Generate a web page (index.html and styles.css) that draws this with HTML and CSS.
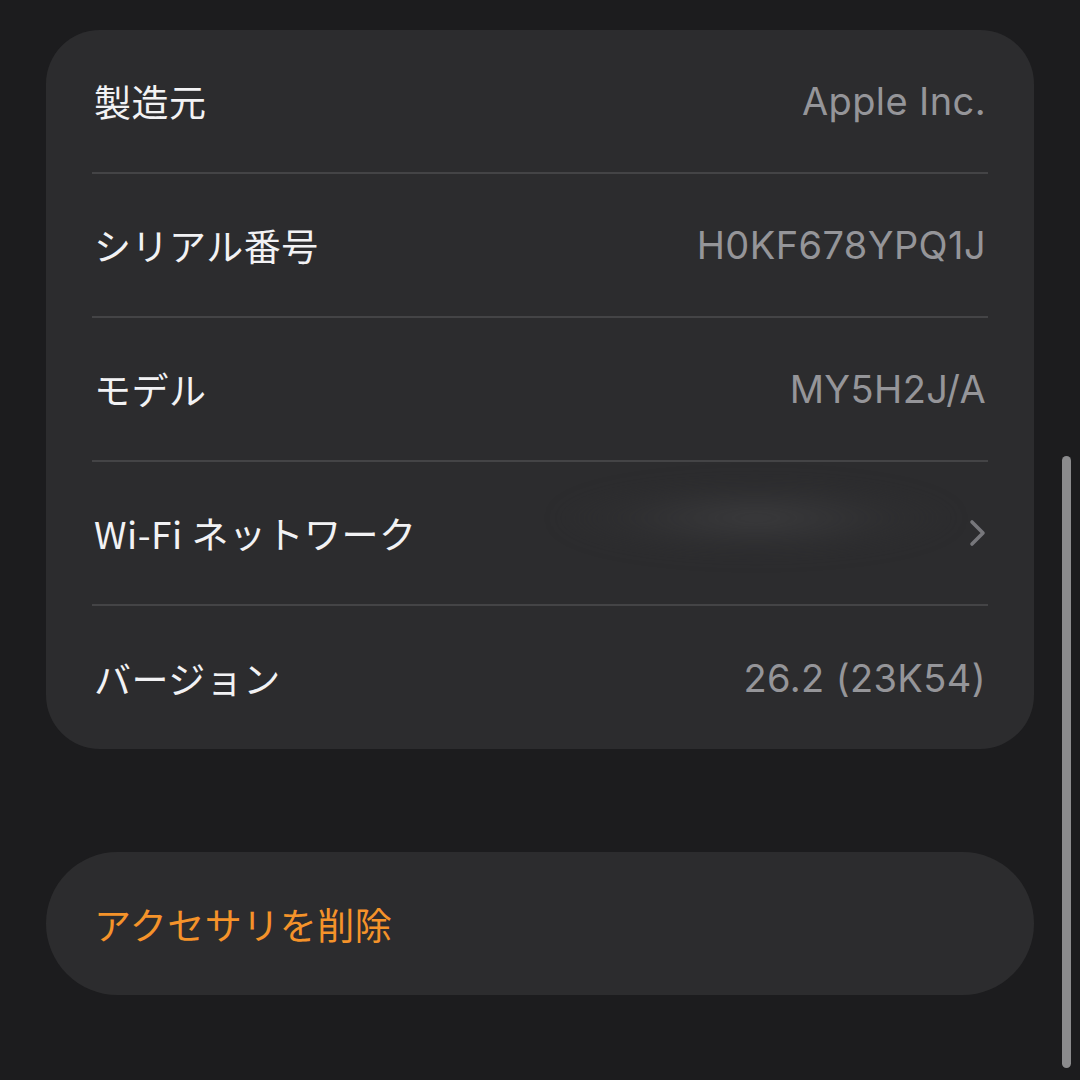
FILE: index.html
```html
<!DOCTYPE html>
<html lang="ja">
<head>
<meta charset="utf-8">
<link rel="stylesheet" href="styles.css">
</head>
<body>
<div class="screen">
  <div class="card">
    <div class="row">
      <span class="label">製造元</span>
      <span class="value">Apple Inc.</span>
    </div>
    <div class="row">
      <span class="label">シリアル番号</span>
      <span class="value">H0KF678YPQ1J</span>
    </div>
    <div class="row">
      <span class="label">モデル</span>
      <span class="value">MY5H2J/A</span>
    </div>
    <div class="row">
      <span class="label">Wi-Fi ネットワーク</span>
      <span class="value link">
        <span class="blur"></span>
        <svg class="chevron" width="20" height="30" viewBox="0 0 20 30"><path d="M4 4 L15 15 L4 26" fill="none" stroke="#77777b" stroke-width="3.6" stroke-linecap="round" stroke-linejoin="round"/></svg>
      </span>
    </div>
    <div class="row">
      <span class="label">バージョン</span>
      <span class="value">26.2 (23K54)</span>
    </div>
  </div>
  <div class="card pill">
    <div class="row action">
      <span class="danger">アクセサリを削除</span>
    </div>
  </div>
  <div class="scrollbar"></div>
</div>
</body>
</html>
```
FILE: styles.css
```css
html, body {
  margin: 0;
  padding: 0;
  background: #1c1c1e;
}
.screen {
  width: 1080px;
  height: 1080px;
  position: relative;
  overflow: hidden;
  padding-top: 30px;
  box-sizing: border-box;
  font-family: "Inter", "Noto Sans CJK JP", sans-serif;
}
.card {
  margin-left: 46px;
  width: 988px;
  background: #2c2c2e;
  border-radius: 54px;
  padding: 0 46px;
  box-sizing: border-box;
}
.pill {
  margin-top: 103px;
  border-radius: 72px;
}
.row {
  height: 144px;
  display: flex;
  align-items: center;
  justify-content: space-between;
  border-bottom: 2px solid #444446;
  box-sizing: border-box;
}
.row:last-child {
  border-bottom: none;
  height: 143px;
}
.label {
  color: #f2f2f4;
  font-size: 37px;
  font-family: "Noto Sans CJK JP", sans-serif;
  letter-spacing: 0.5px;
  margin-left: 2px;
}
.value {
  color: #959599;
  font-size: 38px;
  letter-spacing: 0.4px;
  margin-right: 2px;
}
.link {
  display: flex;
  align-items: center;
  position: relative;
}
.blur {
  position: absolute;
  right: 30px;
  top: -40px;
  width: 400px;
  height: 80px;
  border-radius: 50%;
  background: radial-gradient(ellipse at center, rgba(70,70,72,0.55) 0%, rgba(50,50,52,0.3) 50%, rgba(44,44,46,0) 75%);
  filter: blur(8px);
}
.chevron {
  display: block;
  position: relative;
  margin-right: -2px;
}
.danger {
  color: #f5932a;
  font-size: 37px;
  font-family: "Noto Sans CJK JP", sans-serif;
  letter-spacing: 0.5px;
  margin-left: 2px;
}
.scrollbar {
  position: absolute;
  left: 1062px;
  top: 456px;
  width: 9px;
  height: 612px;
  border-radius: 5px;
  background: #8b8b8d;
}
```
